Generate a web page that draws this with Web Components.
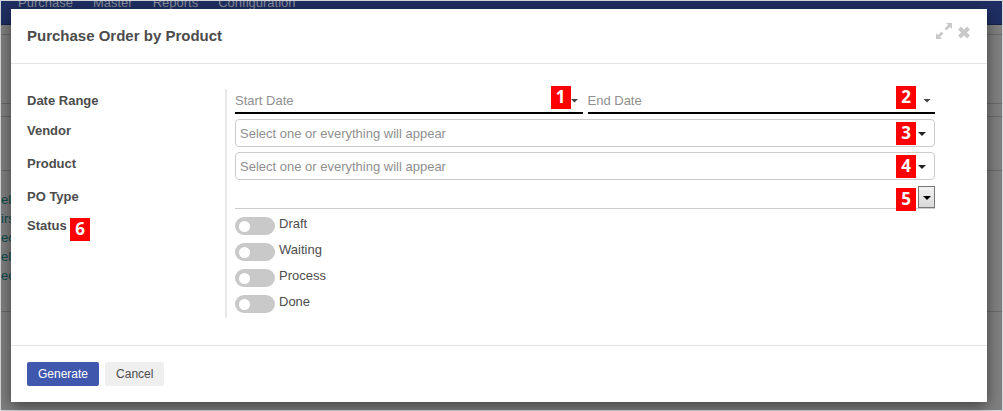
<!DOCTYPE html>
<html lang="en">
<head>
<meta charset="utf-8">
<title>Purchase Order by Product</title>
<style>
    html, body {
        height: 100%;
        margin: 0;
    }
    body {
        font-family: "Liberation Sans", Arial, sans-serif;
        font-size: 13px;
        color: #4c4c4c;
        background: #fff;
    }
</style>
</head>
<body>
<app-shell>
    <a slot="menu" href="#">Purchase</a>
    <a slot="menu" href="#">Master</a>
    <a slot="menu" href="#">Reports</a>
    <a slot="menu" href="#">Configuration</a>
    <modal-dialog slot="modal">
        <span slot="title">Purchase Order by Product</span>
        <date-range label="Date Range"></date-range>
        <combo-field label="Vendor" placeholder="Select one or everything will appear" badge="3"></combo-field>
        <combo-field label="Product" placeholder="Select one or everything will appear" badge="4"></combo-field>
        <select-field label="PO Type" badge="5"></select-field>
        <status-field label="Status" badge="6" options="Draft,Waiting,Process,Done"></status-field>
        <action-button slot="footer" primary>Generate</action-button>
        <action-button slot="footer">Cancel</action-button>
    </modal-dialog>
</app-shell>

<script>
const rowStyle = `
    * { box-sizing: border-box; }
    :host {
        display: grid;
        grid-template-columns: 200px minmax(0, 1fr);
    }
    .label {
        border-right: 2px solid #e8e8e8;
        font-weight: bold;
        line-height: 23px;
    }
    .field {
        position: relative;
        margin: 0 0 5px 8px;
    }
    input, select {
        display: block;
        width: 100%;
        margin: 0;
        font: inherit;
        color: inherit;
        background: transparent;
        outline: none;
    }
    input::placeholder { color: #8f8f8f; opacity: 1; }
    .caret {
        position: absolute;
        top: 50%;
        right: 9px;
        width: 8px;
        height: 4px;
        margin-top: -1px;
        background: #222;
        clip-path: polygon(0 0, 100% 0, 50% 100%);
        pointer-events: none;
    }
    number-badge {
        position: absolute;
        top: 3px;
        right: 19px;
    }
`;

class NumberBadge extends HTMLElement {
    constructor() {
        super();
        this.attachShadow({ mode: 'open' });
        this.shadowRoot.innerHTML = `
            <style>
                :host {
                    display: inline-block;
                    width: 20px;
                    height: 23px;
                    background: #fe0000;
                    color: #fff;
                    font: bold 17px/22px "Noto Sans", sans-serif;
                    text-align: center;
                }
            </style>
            <slot></slot>
        `;
    }
}

class AppShell extends HTMLElement {
    constructor() {
        super();
        this.attachShadow({ mode: 'open' });
        this.shadowRoot.innerHTML = `
            <style>
                * { box-sizing: border-box; }
                :host {
                    display: block;
                    box-sizing: border-box;
                    position: relative;
                    height: 100vh;
                    padding: 1px;
                    background: #d4d8da;
                    overflow: hidden;
                }
                .page {
                    height: 100%;
                    background: #808080;
                    overflow: hidden;
                }
                nav {
                    display: flex;
                    align-items: flex-start;
                    gap: 20px;
                    height: 24px;
                    padding-left: 17px;
                    background: #1f2f63;
                    border-bottom: 1px solid #17224a;
                    line-height: 14px;
                }
                ::slotted(a) {
                    margin-top: -5px;
                    color: #8b8f9c;
                    text-decoration: none;
                }
                .strip { border-bottom: 1px solid #6a6a6a; }
                .crumbs { height: 10px; }
                .title { height: 69px; }
                .tools { height: 13px; }
                .head { height: 54px; }
                .list {
                    height: 141px;
                    padding-top: 19px;
                    color: #0b4a49;
                    line-height: 19px;
                }
                ::slotted(modal-dialog) {
                    position: absolute;
                    inset: 9px 16px 9px 11px;
                }
            </style>
            <div class="page">
                <nav><slot name="menu"></slot></nav>
                <div class="strip crumbs"></div>
                <div class="strip title"></div>
                <div class="strip tools"></div>
                <div class="strip head"></div>
                <div class="strip list">
                    <div>el</div>
                    <div>irs</div>
                    <div>ec</div>
                    <div>el</div>
                    <div>ec</div>
                </div>
            </div>
            <slot name="modal"></slot>
        `;
    }
}

class ModalDialog extends HTMLElement {
    constructor() {
        super();
        this.attachShadow({ mode: 'open' });
        this.shadowRoot.innerHTML = `
            <style>
                :host {
                    display: flex;
                    flex-direction: column;
                    background: #fff;
                    box-shadow: 0 4px 14px rgba(0, 0, 0, 0.5);
                }
                header {
                    display: flex;
                    justify-content: space-between;
                    padding: 14px 17px 14px 16px;
                    border-bottom: 1px solid #e5e5e5;
                }
                h4 {
                    margin: 0;
                    font-size: 15px;
                    line-height: 26px;
                }
                .tools {
                    display: flex;
                    align-items: flex-start;
                    gap: 6px;
                }
                .tools button {
                    display: block;
                    padding: 0;
                    border: 0;
                    background: none;
                    color: #c9c9c9;
                }
                svg { display: block; }
                main {
                    flex: 1;
                    padding: 25px 52px 0 16px;
                }
                footer {
                    display: flex;
                    gap: 6px;
                    padding: 16px;
                    border-top: 1px solid #e5e5e5;
                }
            </style>
            <header>
                <h4><slot name="title"></slot></h4>
                <div class="tools">
                    <button type="button" aria-label="Expand">
                        <svg width="16" height="16" viewBox="0 0 16 16" fill="currentColor">
                            <path d="M10 0h6v6l-2-2-3.500 3.500-2-2L12 2z"/>
                            <path d="M6 16H0v-6l2 2 3.500-3.500 2 2L4 14z"/>
                        </svg>
                    </button>
                    <button type="button" aria-label="Close">
                        <svg width="12" height="16" viewBox="0 0 12 16" stroke="currentColor" stroke-width="4">
                            <path d="M1.500 5L10.500 14M10.500 5L1.500 14"/>
                        </svg>
                    </button>
                </div>
            </header>
            <main><slot></slot></main>
            <footer><slot name="footer"></slot></footer>
        `;
    }
}

class DateRange extends HTMLElement {
    connectedCallback() {
        this.attachShadow({ mode: 'open' });
        this.shadowRoot.innerHTML = `
            <style>
                ${rowStyle}
                .dates {
                    display: grid;
                    grid-template-columns: 1fr 1fr;
                    gap: 5px;
                }
                .date { position: relative; }
                input {
                    height: 25px;
                    padding: 0;
                    border: 0;
                    border-bottom: 2px solid #000;
                }
                .caret {
                    right: 4px;
                    margin-top: -3px;
                    background: #444;
                }
                number-badge { top: -3px; }
                .date:first-child number-badge { right: 12px; }
            </style>
            <label class="label" for="start">${this.getAttribute('label')}</label>
            <div class="field dates">
                <div class="date">
                    <input id="start" type="text" placeholder="Start Date">
                    <span class="caret"></span>
                    <number-badge>1</number-badge>
                </div>
                <div class="date">
                    <input type="text" placeholder="End Date" aria-label="End Date">
                    <span class="caret"></span>
                    <number-badge>2</number-badge>
                </div>
            </div>
        `;
    }
}

class ComboField extends HTMLElement {
    connectedCallback() {
        this.attachShadow({ mode: 'open' });
        this.shadowRoot.innerHTML = `
            <style>
                ${rowStyle}
                input {
                    height: 28px;
                    padding: 0 4px;
                    border: 1px solid #ccc;
                    border-radius: 4px;
                }
            </style>
            <label class="label" for="combo">${this.getAttribute('label')}</label>
            <div class="field">
                <input id="combo" type="text" placeholder="${this.getAttribute('placeholder')}">
                <span class="caret"></span>
                <number-badge>${this.getAttribute('badge')}</number-badge>
            </div>
        `;
    }
}

class SelectField extends HTMLElement {
    connectedCallback() {
        this.attachShadow({ mode: 'open' });
        this.shadowRoot.innerHTML = `
            <style>
                ${rowStyle}
                select {
                    height: 24px;
                    padding: 0;
                    border: 0;
                    border-bottom: 1px solid #ccc;
                    border-radius: 0;
                    appearance: none;
                }
                .arrow {
                    position: absolute;
                    top: 1px;
                    right: 0;
                    width: 17px;
                    height: 22px;
                    border: 1px solid #777;
                    background: linear-gradient(#f2f2f2, #d8d8d8);
                    pointer-events: none;
                }
                .caret {
                    right: 4px;
                    background: #000;
                }
            </style>
            <label class="label" for="select">${this.getAttribute('label')}</label>
            <div class="field">
                <select id="select"><option></option></select>
                <span class="arrow"></span>
                <span class="caret"></span>
                <number-badge>${this.getAttribute('badge')}</number-badge>
            </div>
        `;
    }
}

class ToggleSwitch extends HTMLElement {
    constructor() {
        super();
        this.attachShadow({ mode: 'open' });
        this.shadowRoot.innerHTML = `
            <style>
                :host { display: block; }
                label {
                    display: flex;
                    gap: 4px;
                    height: 18px;
                    line-height: 14px;
                }
                input {
                    display: flex;
                    align-items: center;
                    box-sizing: border-box;
                    width: 40px;
                    height: 18px;
                    margin: 0;
                    padding: 0 4px;
                    border-radius: 9px;
                    background: #c9c9c9;
                    appearance: none;
                }
                input::before {
                    content: "";
                    width: 11px;
                    height: 11px;
                    border-radius: 50%;
                    background: #fff;
                }
                input:checked { justify-content: flex-end; background: #3f58ad; }
            </style>
            <label><input type="checkbox"><slot></slot></label>
        `;
    }
}

class StatusField extends HTMLElement {
    connectedCallback() {
        this.attachShadow({ mode: 'open' });
        const options = this.getAttribute('options').split(',');
        this.shadowRoot.innerHTML = `
            <style>
                ${rowStyle}
                .label { position: relative; }
                .toggles {
                    display: grid;
                    gap: 8px;
                    padding-top: 3px;
                }
                number-badge {
                    top: 4px;
                    left: 43px;
                }
            </style>
            <div class="label"><span id="caption">${this.getAttribute('label')}</span><number-badge>${this.getAttribute('badge')}</number-badge></div>
            <div class="field toggles" role="group" aria-labelledby="caption">
                ${options.map(option => `<toggle-switch>${option}</toggle-switch>`).join('')}
            </div>
        `;
    }
}

class ActionButton extends HTMLElement {
    constructor() {
        super();
        this.attachShadow({ mode: 'open' });
        this.shadowRoot.innerHTML = `
            <style>
                :host {
                    display: block;
                    font-size: 12px;
                }
                button {
                    display: block;
                    height: 24px;
                    padding: 0 11px;
                    border: 0;
                    border-radius: 2px;
                    background: #efefef;
                    color: #4c4c4c;
                    font: inherit;
                }
                :host([primary]) button {
                    background: #3f58ad;
                    color: #fff;
                }
            </style>
            <button type="button"><slot></slot></button>
        `;
    }
}

customElements.define('number-badge', NumberBadge);
customElements.define('toggle-switch', ToggleSwitch);
customElements.define('action-button', ActionButton);
customElements.define('date-range', DateRange);
customElements.define('combo-field', ComboField);
customElements.define('select-field', SelectField);
customElements.define('status-field', StatusField);
customElements.define('modal-dialog', ModalDialog);
customElements.define('app-shell', AppShell);
</script>
</body>
</html>
